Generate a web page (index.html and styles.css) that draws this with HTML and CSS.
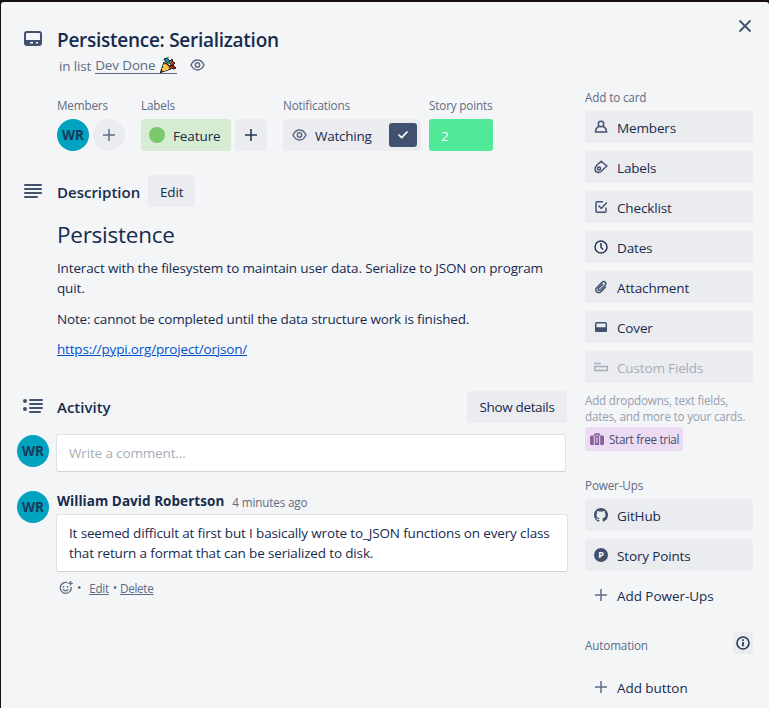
FILE: index.html
```html
<!DOCTYPE html>
<html lang="en">
<head>
<meta charset="utf-8">
<title>Persistence: Serialization</title>
<link rel="stylesheet" href="styles.css">
</head>
<body>
<div class="window">
  <button class="close" aria-label="Close"><svg width="14" height="14" viewBox="0 0 14 14"><path d="M1.500 1.500l11 11M12.500 1.500l-11 11" fill="none" stroke="#42526e" stroke-width="1.800"/></svg></button>

  <main class="main">
    <header class="row head">
      <div class="gutter"><svg class="ic-card" width="18" height="15" viewBox="0 0 18 15"><rect x="1" y="1" width="16" height="13" rx="2" fill="none" stroke="#42526e" stroke-width="2"/><path d="M1 9h16v4l-1 1H2l-1-1z" fill="#42526e"/><path d="M6 11.800h3M12 11.800h2" stroke="#f4f5f7" stroke-width="1.500"/></svg></div>
      <div>
        <h1 class="title"><span>Persistence: Serialization</span></h1>
        <p class="sub"><span class="in-list">in list</span> <a class="list-link"><span>Dev Done</span><svg width="18" height="17" viewBox="0 0 18 17"><path d="M1.500 15.500L5 5.500q5 1.500 6.500 6.500z" fill="#fdb62f" stroke="#171717" stroke-width="1.200" stroke-linejoin="round"/><path d="M4 8l5 5M3 11l3.500 3" stroke="#ffdc70" stroke-width="1.200"/><path d="M5 2l3-1 3 3-1 3-4-3z" fill="#168bbb" stroke="#171717"/><path d="M10 5l3-3 1 3 2 1-3 3z" fill="#d92929" stroke="#171717"/><path d="M10 9l4-1 3 3-2 1-3-1" fill="#b4231e" stroke="#171717"/><path d="M8 1l2-1M9 7l3-2" stroke="#43a536" stroke-width="1.500"/></svg></a>
          <svg class="eye" width="15" height="12" viewBox="0 0 15 12"><path d="M1 6Q3.400 1 7.500 1T14 6Q11.600 11 7.500 11T1 6z" fill="none" stroke="#5e6c84" stroke-width="1.500"/><circle cx="7.500" cy="6" r="2.200" fill="none" stroke="#5e6c84" stroke-width="1.500"/></svg></p>
      </div>
    </header>

    <section class="details">
      <div class="detail"><h3 class="cap">Members</h3><div class="items"><span class="avatar">WR</span><button class="round"><svg width="12" height="12" viewBox="0 0 12 12"><path d="M6 0v12M0 6h12" stroke="#5e6c84" stroke-width="1.500"/></svg></button></div></div>
      <div class="detail"><h3 class="cap">Labels</h3><div class="items"><span class="tag"><i></i><span>Feature</span></span><button class="square"><svg width="12" height="12" viewBox="0 0 12 12"><path d="M6 0v12M0 6h12" stroke="#253858" stroke-width="1.600"/></svg></button></div></div>
      <div class="detail"><h3 class="cap notif">Notifications</h3><div class="watch"><svg width="15" height="12" viewBox="0 0 15 12"><path d="M1 6Q3.400 1 7.500 1T14 6Q11.600 11 7.500 11T1 6z" fill="none" stroke="#5e6c84" stroke-width="1.500"/><circle cx="7.500" cy="6" r="2.200" fill="none" stroke="#5e6c84" stroke-width="1.500"/></svg><span>Watching</span><b class="check"><svg width="10" height="8" viewBox="0 0 10 8"><path d="M1 4l2.700 2.700L9 1" fill="none" stroke="#fff" stroke-width="1.700" stroke-linecap="round" stroke-linejoin="round"/></svg></b></div></div>
      <div class="detail"><h3 class="cap">Story points</h3><div class="points">2</div></div>
    </section>

    <section class="row desc-head">
      <div class="gutter"><svg width="18" height="14" viewBox="0 0 18 14"><path d="M1 1h16M1 5h16M1 9h16M1 13h12" stroke="#42526e" stroke-width="2" stroke-linecap="round"/></svg></div>
      <h2 class="h-desc">Description</h2><button class="btn edit">Edit</button>
    </section>
    <article class="desc">
      <h2><span>Persistence</span></h2>
      <p><span class="l1">Interact with the filesystem to maintain user data. Serialize to JSON on program</span><br><span class="l2">quit.</span></p>
      <p><span class="l3">Note: cannot be completed until the data structure work is finished.</span></p>
      <p><a class="l4">https://pypi.org/project/orjson/</a></p>
    </article>

    <section class="row act-head">
      <div class="gutter"><svg width="20" height="16" viewBox="0 0 20 16"><path d="M7 2h12M7 6h12M7 10h12M7 14h10" stroke="#42526e" stroke-width="2" stroke-linecap="round"/><circle cx="2" cy="3" r="2" fill="#42526e"/><circle cx="2" cy="11" r="2" fill="#42526e"/></svg></div>
      <h2 class="h-act">Activity</h2><button class="btn show">Show details</button>
    </section>
    <section class="row new"><div class="gutter"><span class="avatar">WR</span></div><div class="input"><span>Write a comment…</span></div></section>
    <section class="row comment">
      <div class="gutter"><span class="avatar">WR</span></div>
      <div class="body">
        <div class="meta"><strong>William David Robertson</strong><time>4 minutes ago</time></div>
        <div class="bubble"><span class="c1">It seemed difficult at first but I basically wrote to_JSON functions on every class</span><br><span class="c2">that return a format that can be serialized to disk.</span></div>
        <div class="actions"><svg width="14" height="14" viewBox="0 0 14 14"><path d="M8.500 1.600A5.500 5.500 0 1 0 12.200 6" fill="none" stroke="#5e6c84" stroke-width="1.300"/><circle cx="4.600" cy="5.800" r=".9" fill="#5e6c84"/><circle cx="8.600" cy="5.800" r=".9" fill="#5e6c84"/><path d="M4 8.300q2.600 3 5.200 0M11.500 0v4.600M9.200 2.300h4.600" fill="none" stroke="#5e6c84" stroke-width="1.300"/></svg><i>•</i><a class="a-edit">Edit</a><i>•</i><a class="a-del">Delete</a></div>
      </div>
    </section>
  </main>

  <aside class="side">
    <h3 class="cap add">Add to card</h3>
    <nav class="stack">
      <a class="item"><svg viewBox="0 0 14 14"><circle cx="7" cy="4" r="2.700"/><path d="M5 6.500C2.500 7.500 1.500 9.500 1.500 12h11c0-2.500-1-4.500-3.500-5.500"/></svg><span>Members</span></a>
      <a class="item"><svg viewBox="0 0 14 14"><path d="M7.200 1.200L12.800 6 7 11.500C5 13.200 1.200 12.500 1 9.500 .9 7.500 2 6 3 5z"/><circle cx="5" cy="8.600" r="1.500"/></svg><span>Labels</span></a>
      <a class="item"><svg viewBox="0 0 14 14"><path d="M9 1.700H3q-1 0-1 1v8.600q0 1 1 1h8q1 0 1-1V7.500M4.500 5.500l2.700 3L12.800 2.500"/></svg><span>Checklist</span></a>
      <a class="item dark"><svg viewBox="0 0 14 14"><circle cx="7" cy="7" r="6"/><path d="M7 3v4.500l2.200 2"/></svg><span>Dates</span></a>
      <a class="item"><svg viewBox="0 0 14 14"><path d="M11.900 6.700l-4.700 4.800c-3 3-7.200-.7-4.500-3.700l5.400-5.500c2.100-2 5 .7 3.100 2.800L6.500 9.800C5 11.200 3.300 9.500 4.600 8.200L9 3.900"/></svg><span>Attachment</span></a>
      <a class="item"><svg viewBox="0 0 14 14"><rect x="1.700" y="2.700" width="10.600" height="8.600" rx="1"/><path d="M2 8h10v3H2z" fill="#42526e"/></svg><span>Cover</span></a>
      <a class="item off"><svg viewBox="0 0 14 14"><path d="M0 3.500h7M.7 6.500h12.600v4H.7z"/></svg><span>Custom Fields</span></a>
    </nav>
    <p class="promo"><span class="p1">Add dropdowns, text fields,</span><br><span class="p2">dates, and more to your cards.</span></p>
    <a class="trial"><svg width="14" height="13" viewBox="0 0 14 13"><path d="M4.500 3V1.700Q4.500 1 5.200 1h3.600q.7 0 .7.700V3" fill="none" stroke="#89609e" stroke-width="1.300"/><rect y="2.500" width="14" height="9.500" rx="1.500" fill="#89609e"/><path d="M4.300 2.500V12M9.700 2.500V12" stroke="#eddbf4" stroke-width="1"/><path d="M7 4v6" stroke="#eddbf4"/></svg><span>Start free trial</span></a>

    <h3 class="cap power">Power-Ups</h3>
    <nav class="stack">
      <a class="item"><svg viewBox="0 0 16 16"><path class="solid" d="M8 0C3.580 0 0 3.580 0 8c0 3.540 2.290 6.530 5.470 7.590.4.070.55-.17.55-.38 0-.19-.010-.82-.010-1.490-2.010.37-2.530-.49-2.690-.94-.09-.23-.48-.94-.82-1.130-.28-.15-.68-.52-.010-.53.63-.010 1.080.58 1.230.82.72 1.210 1.870.87 2.330.66.070-.52.28-.87.51-1.070-1.780-.2-3.640-.89-3.640-3.950 0-.87.31-1.590.82-2.150-.08-.2-.36-1.020.08-2.120 0 0 .67-.21 2.200.82.64-.18 1.320-.27 2-.27s1.360.09 2 .27c1.530-1.040 2.200-.82 2.200-.82.44 1.100.16 1.920.08 2.120.51.56.82 1.270.82 2.150 0 3.070-1.870 3.750-3.650 3.950.29.25.54.73.54 1.480 0 1.070-.010 1.930-.010 2.200 0 .21.15.46.55.38A8.010 8.010 0 0 0 16 8c0-4.420-3.580-8-8-8z"/></svg><span>GitHub</span></a>
      <a class="item"><b class="p-mark">P</b><span>Story Points</span></a>
      <a class="item plain"><svg viewBox="0 0 14 14"><path d="M7 1v12M1 7h12"/></svg><span>Add Power-Ups</span></a>
    </nav>
    <div class="auto"><h3 class="cap">Automation</h3><b class="info"><svg width="14" height="14" viewBox="0 0 14 14"><circle cx="7" cy="7" r="6" fill="none" stroke="#253858" stroke-width="1.600"/><path d="M7 6v4.300M7 3.300v1.600" stroke="#253858" stroke-width="1.700"/></svg></b></div>
    <a class="item plain"><svg viewBox="0 0 14 14"><path d="M7 1v12M1 7h12"/></svg><span>Add button</span></a>
  </aside>
</div>
</body>
</html>
```
FILE: styles.css
```css
* { box-sizing: border-box; margin: 0; padding: 0; }
body { background: #16110f; height: 708px; overflow: hidden; padding: 2px 0 0 1px; font: 13.5px/20px "Open Sans", "Noto Sans", sans-serif; letter-spacing: -.15px; color: #172b4d; }
.window { position: relative; display: flex; height: 706px; background: #f4f5f7; border-radius: 3px 3px 0 0; overflow: hidden; }
button { border: 0; background: #ebecf0; color: inherit; font: inherit; letter-spacing: inherit; display: flex; align-items: center; justify-content: center; border-radius: 3px; }
span, strong, time, a, h2, h3 { white-space: nowrap; }
svg { flex: none; display: block; }
.close { position: absolute; right: 17px; top: 17px; background: none; }
.main { width: 566px; padding-left: 16px; flex: none; }
.row { display: flex; }
.gutter { width: 40px; flex: none; }
.head { padding-top: 26px; height: 95px; }
.head .gutter { padding: 3px 0 0 7px; }
.title { font-size: 19px; line-height: 24px; font-weight: 600; letter-spacing: -.27px; }
.sub { display: flex; padding-left: 2px; margin-top: 4px; color: #5e6c84; gap: 4px; }
.list-link { display: flex; align-items: center; gap: 4px; height: 17px; margin-top: 1px; border-bottom: 1px solid #5e6c84; }
.eye { margin: 3px 0 0 9px; }
.cap { font-size: 11.7px; line-height: 20px; font-weight: 500; color: #5e6c84; }
.details { display: flex; margin-left: 40px; height: 78px; }
.detail { margin-right: 16px; }
.detail:nth-child(3) { margin-right: 8px; }
.cap + .items, .cap + .watch, .cap + .points { margin-top: 4px; }
.details .cap { margin-top: -2px; }
.items { display: flex; gap: 4px; }
.avatar { display: block; width: 32px; height: 32px; border-radius: 50%; background: #00a3bf; color: #173a5c; font-weight: 700; line-height: 32px; text-align: center; font-size: 13.5px; letter-spacing: 0; }
.round, .square { width: 32px; height: 32px; }
.round { border-radius: 50%; }
.tag { display: flex; align-items: center; width: 90px; height: 32px; padding-left: 8px; background: #d6ecd2; border-radius: 3px; gap: 8px; letter-spacing: -.1px; }
.tag i { width: 16px; height: 16px; background: #7bc86c; border-radius: 50%; }
.tag span, .watch span { margin-top: 2px; }
.watch { display: flex; align-items: center; width: 138px; height: 32px; padding: 0 4px 0 9px; background: #ebecf0; border-radius: 3px; }
.watch span { margin-left: 8px; letter-spacing: -.25px; }
.check { width: 28px; height: 24px; margin-left: auto; background: #42526e; border-radius: 3px; display: flex; align-items: center; justify-content: center; }
.points { width: 64px; height: 32px; padding: 2px 12px 0; line-height: 31px; background: #51e898; color: #fff; border-radius: 3px; }
.desc-head { height: 40px; align-items: flex-start; }
.desc-head .gutter { padding: 9px 0 0 7px; }
.row > h2 { font-size: 15px; font-weight: 600; line-height: 34px; letter-spacing: 0; }
.row > .h-act { line-height: 32px; }
.btn { height: 32px; }
.edit { width: 47px; margin-left: 8px; padding-top: 2px; }
.desc { margin-left: 40px; height: 176px; }
.desc h2 { font-size: 22.5px; line-height: 28px; font-weight: 400; letter-spacing: -.25px; padding-top: 6px; height: 41px; }
.desc p { margin: 0 0 10.500px; }
.desc h2 + p { margin-top: 2px; }
.l3 { letter-spacing: -.19px; }
.l4 { color: #0052cc; text-decoration: underline; letter-spacing: -.19px; }
.act-head { height: 44px; }
.act-head .gutter { padding: 7px 0 0 6px; }
.show { width: 100px; margin-left: auto; letter-spacing: -.35px; }
.new { height: 56px; }
.input { width: 510px; height: 38px; margin: -1px 0 0 -1px; padding: 8px 12px; background: #fff; border: 1px solid #dfe1e6; border-bottom-color: #d0d3da; border-radius: 3px; color: #a5adba; }
.body { flex: none; width: 512px; margin-left: -1px; }
.meta { height: 23px; padding-left: 1px; display: flex; gap: 8px; }
.meta strong { letter-spacing: .05px; }
.meta time { font-size: 11.7px; color: #5e6c84; line-height: 22px; }
.bubble { height: 58px; padding: 8px 12px; background: #fff; border: 1px solid #dfe1e6; border-bottom-color: #d0d3da; border-radius: 3px; }
.actions { display: flex; align-items: center; height: 20px; margin: 6px 0 0 3px; color: #5e6c84; font-size: 11.7px; letter-spacing: -.3px; }
.actions i { font-style: normal; margin: 0 3px 0 4px; font-size: 12px; }
.actions a { text-decoration: underline; }
.actions .a-edit { margin-left: 5px; }
.side { width: 168px; margin-left: 18px; padding-top: 85px; }
.side .cap { height: 24px; }
.stack { display: flex; flex-direction: column; gap: 8px; }
.item { display: flex; align-items: center; height: 32px; padding-left: 9px; gap: 9px; background: #ebecf0; border-radius: 3px; }
.item span { margin-top: 2px; }
.item svg { width: 14px; height: 14px; fill: none; stroke: #42526e; stroke-width: 1.5; }
.item .solid { fill: #42526e; stroke: none; }
.dark svg { stroke: #253858; }
.item.plain { letter-spacing: -.05px; }
.off { color: #a5adba; }
.off svg { stroke: #a5adba; }
.plain { background: none; }
.plain svg { stroke: #5e6c84; }
.promo { margin-top: 9px; font-size: 11.7px; line-height: 16px; color: #97a0af; letter-spacing: -.22px; }
.trial { display: flex; align-items: center; width: 98px; height: 24px; margin-top: 3px; padding-left: 5px; gap: 5px; background: #eddbf4; border-radius: 3px; color: #42526e; font-size: 11.7px; letter-spacing: -.32px; }
.power { margin-top: 24px; }
.p-mark { width: 14px; height: 14px; border-radius: 50%; background: #42526e; color: #fff; font-size: 9px; line-height: 14px; text-align: center; }
.auto { display: flex; justify-content: space-between; margin: 21px 0 16px; height: 23px; }
.auto .cap { margin-top: 3px; }
.info { width: 20px; height: 22px; background: #ebecf0; border-radius: 3px; display: flex; align-items: center; justify-content: center; }
```
